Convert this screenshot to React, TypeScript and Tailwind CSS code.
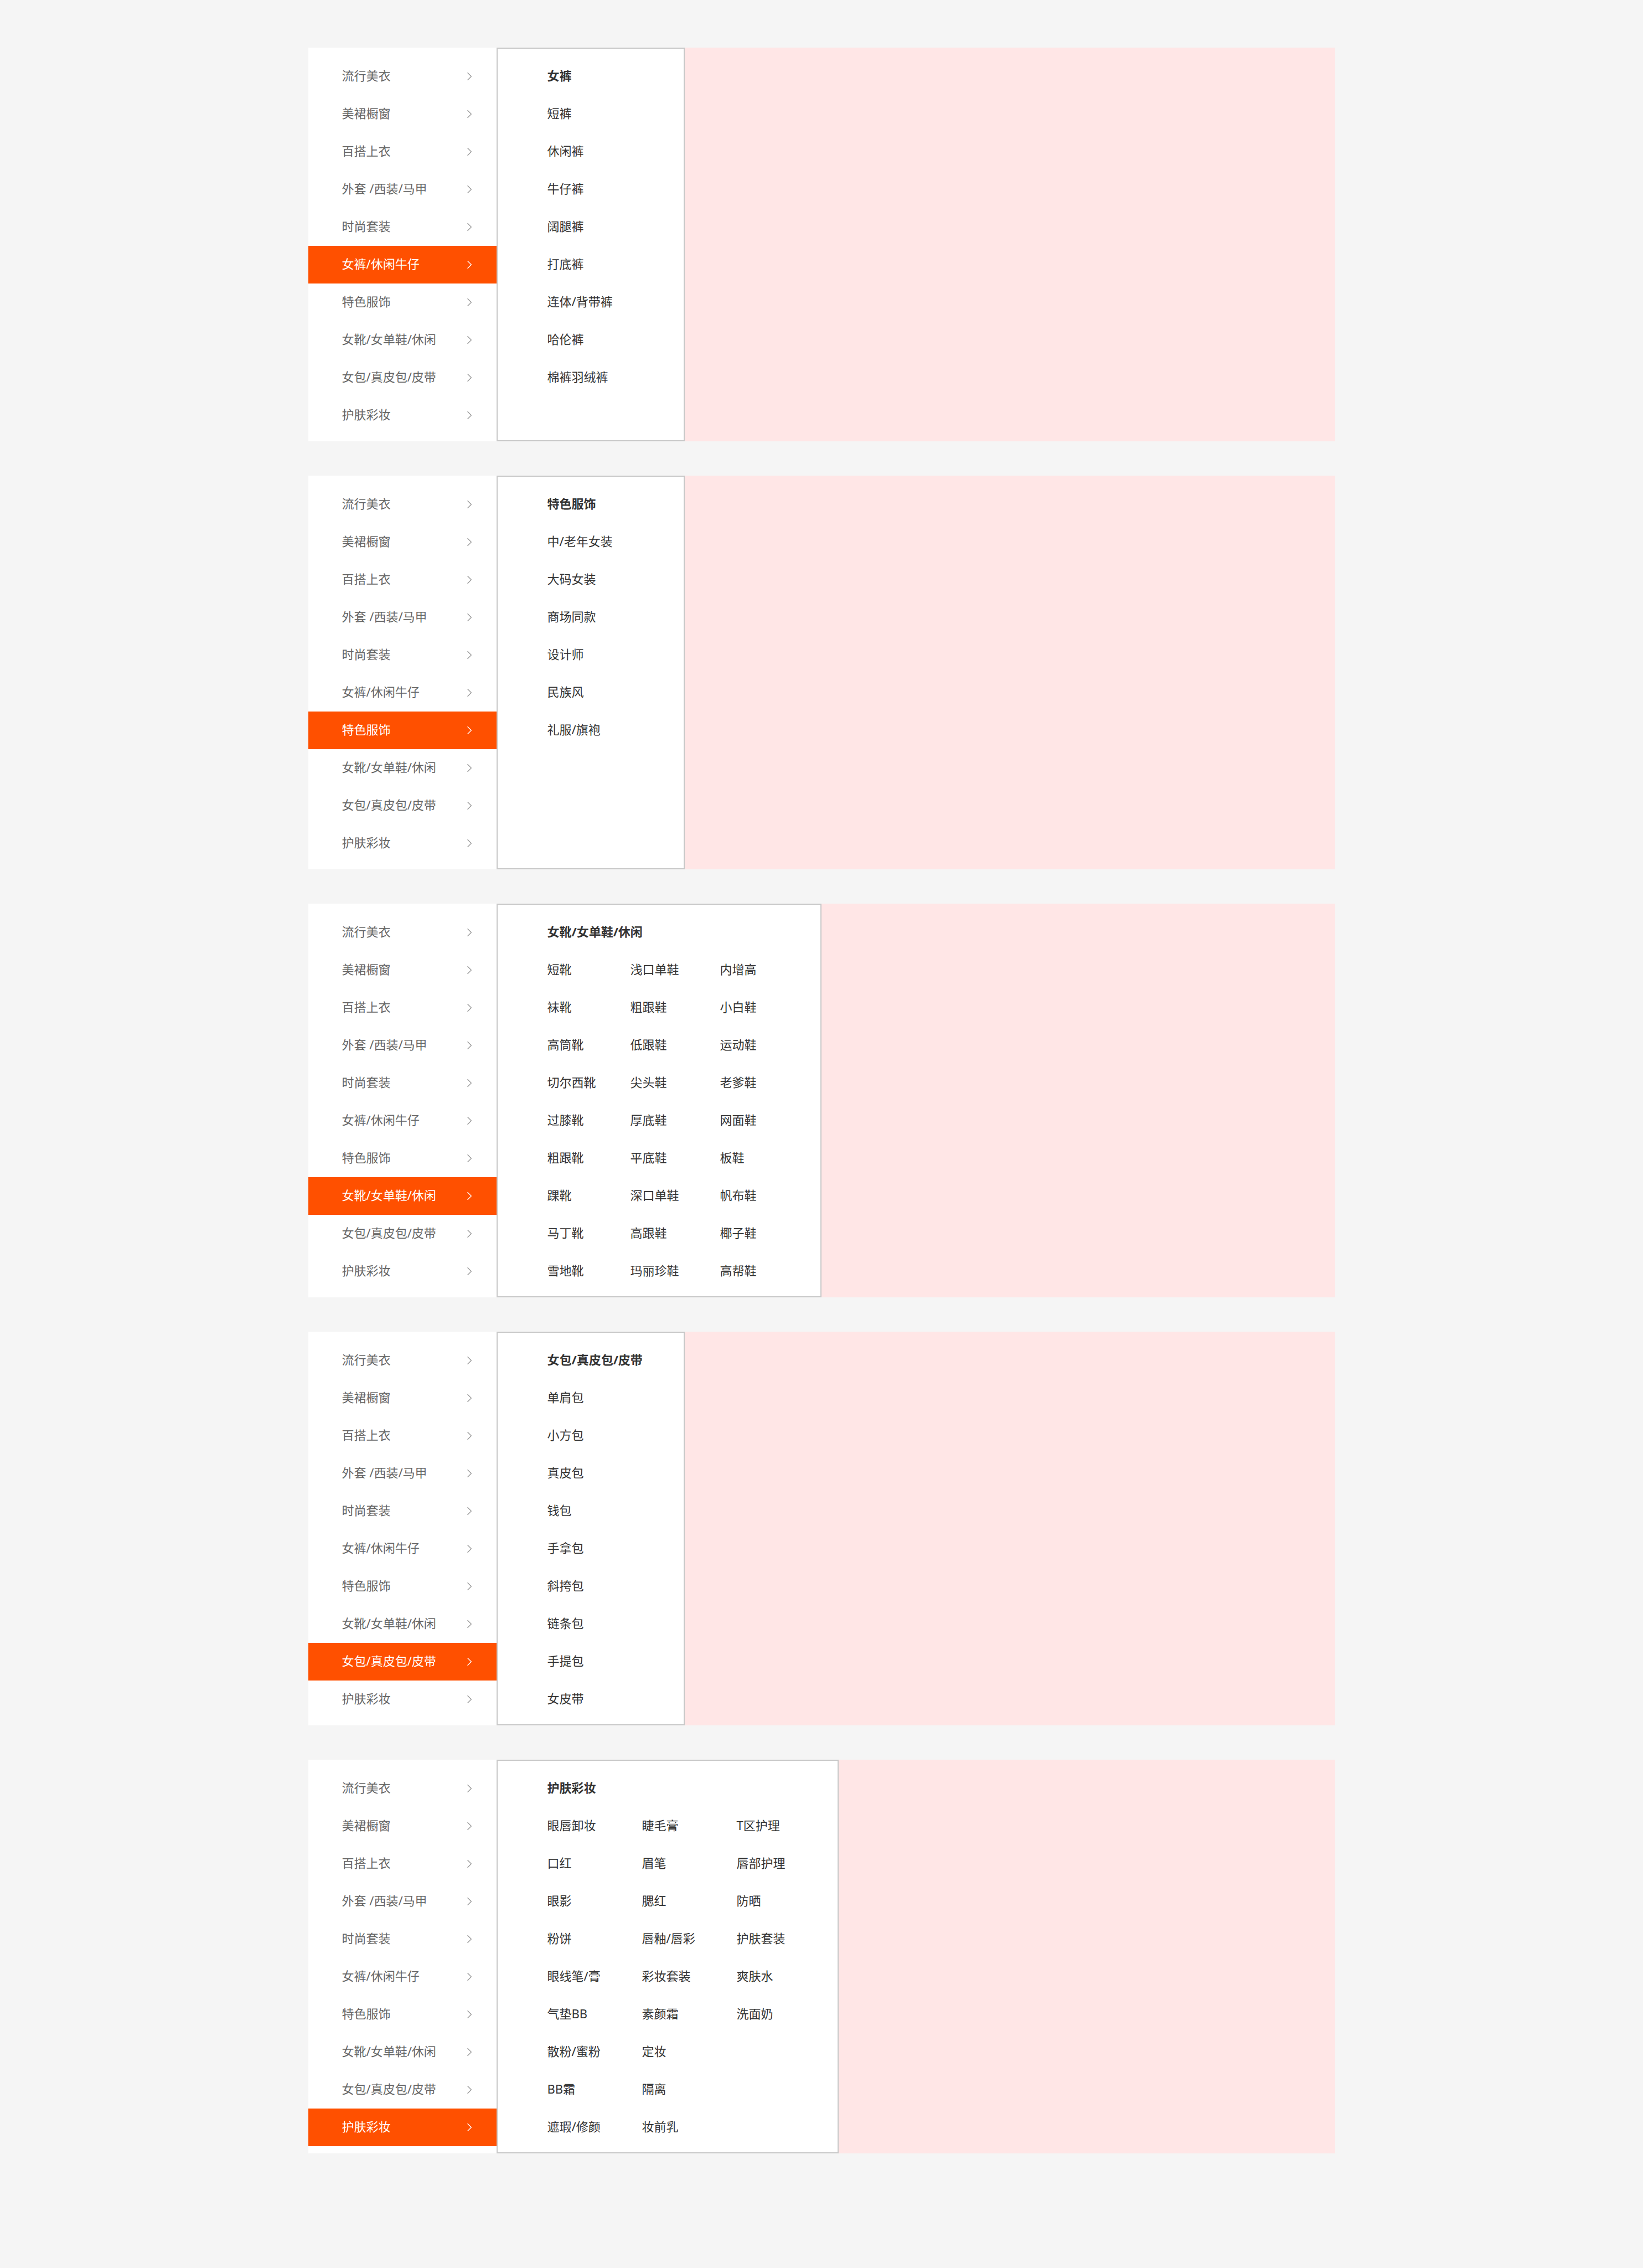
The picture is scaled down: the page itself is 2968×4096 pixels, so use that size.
const categories = [
  '流行美衣',
  '美裙橱窗',
  '百搭上衣',
  '外套 /西装/马甲',
  '时尚套装',
  '女裤/休闲牛仔',
  '特色服饰',
  '女靴/女单鞋/休闲',
  '女包/真皮包/皮带',
  '护肤彩妆',
];

type Menu = {
  active: string;
  title: string;
  panel: string;
  grid: string;
  columns: string[][];
};

const single = 'grid-cols-1';
const narrow = 'w-[340px]';

const menus: Menu[] = [
  {
    active: '女裤/休闲牛仔',
    title: '女裤',
    panel: narrow,
    grid: single,
    columns: [['短裤', '休闲裤', '牛仔裤', '阔腿裤', '打底裤', '连体/背带裤', '哈伦裤', '棉裤羽绒裤']],
  },
  {
    active: '特色服饰',
    title: '特色服饰',
    panel: narrow,
    grid: single,
    columns: [['中/老年女装', '大码女装', '商场同款', '设计师', '民族风', '礼服/旗袍']],
  },
  {
    active: '女靴/女单鞋/休闲',
    title: '女靴/女单鞋/休闲',
    panel: 'w-[587px]',
    grid: 'grid-cols-[150px_162px_1fr]',
    columns: [
      ['短靴', '袜靴', '高筒靴', '切尔西靴', '过膝靴', '粗跟靴', '踝靴', '马丁靴', '雪地靴'],
      ['浅口单鞋', '粗跟鞋', '低跟鞋', '尖头鞋', '厚底鞋', '平底鞋', '深口单鞋', '高跟鞋', '玛丽珍鞋'],
      ['内增高', '小白鞋', '运动鞋', '老爹鞋', '网面鞋', '板鞋', '帆布鞋', '椰子鞋', '高帮鞋'],
    ],
  },
  {
    active: '女包/真皮包/皮带',
    title: '女包/真皮包/皮带',
    panel: narrow,
    grid: single,
    columns: [['单肩包', '小方包', '真皮包', '钱包', '手拿包', '斜挎包', '链条包', '手提包', '女皮带']],
  },
  {
    active: '护肤彩妆',
    title: '护肤彩妆',
    panel: 'w-[618px]',
    grid: 'grid-cols-[171px_171px_1fr]',
    columns: [
      ['眼唇卸妆', '口红', '眼影', '粉饼', '眼线笔/膏', '气垫BB', '散粉/蜜粉', 'BB霜', '遮瑕/修颜'],
      ['睫毛膏', '眉笔', '腮红', '唇釉/唇彩', '彩妆套装', '素颜霜', '定妆', '隔离', '妆前乳'],
      ['T区护理', '唇部护理', '防晒', '护肤套装', '爽肤水', '洗面奶'],
    ],
  },
];

function Chevron({ active }: { active: boolean }) {
  return (
    <svg
      viewBox="0 0 8 14"
      aria-hidden="true"
      className={active ? 'h-3.5 w-2 text-white' : 'h-3.5 w-2 text-[#999999]'}
      fill="none"
      stroke="currentColor"
      strokeWidth="1.3"
    >
      <path d="M0.5 0.2 7.3 7 0.5 13.8" />
    </svg>
  );
}

function Sidebar({ active }: { active: string }) {
  return (
    <nav aria-label={active} className="w-[340px] shrink-0 bg-white pt-[18px] pb-[13px]">
      <ul>
        {categories.map((name) => {
          const on = name === active;
          return (
            <li key={name}>
              <a
                href="#"
                aria-current={on ? 'true' : undefined}
                className={
                  on
                    ? 'flex h-[68px] items-center justify-between bg-[#ff5000] pr-[45px] pl-[61px] text-white'
                    : 'flex h-[68px] items-center justify-between pr-[45px] pl-[61px] text-[#666666]'
                }
              >
                <span className="pb-1">{name}</span>
                <Chevron active={on} />
              </a>
            </li>
          );
        })}
      </ul>
    </nav>
  );
}

function Panel({ menu }: { menu: Menu }) {
  return (
    <div className={`${menu.panel} shrink-0 border-2 border-[#c8c8c8] bg-white pt-4 pl-[90px] text-[#333333]`}>
      <h2 className="flex h-[68px] items-center pb-1 font-bold">{menu.title}</h2>
      <div className={`grid ${menu.grid}`}>
        {menu.columns.map((items) => (
          <ul key={items[0]}>
            {items.map((item) => (
              <li key={item}>
                <a href="#" className="flex h-[68px] items-center pb-1">
                  {item}
                </a>
              </li>
            ))}
          </ul>
        ))}
      </div>
    </div>
  );
}

export default function App() {
  return (
    <main
      lang="zh-CN"
      className="flex min-h-screen flex-col items-center gap-[62px] bg-[#f5f5f5] pt-[86px] pb-[207px] text-[22px] leading-8 font-['Noto_Sans','Noto_Sans_CJK_SC',sans-serif]"
    >
      {menus.map((menu) => (
        <section key={menu.active} className="flex w-5/8 bg-[#ffe6e6]">
          <Sidebar active={menu.active} />
          <Panel menu={menu} />
        </section>
      ))}
    </main>
  );
}
